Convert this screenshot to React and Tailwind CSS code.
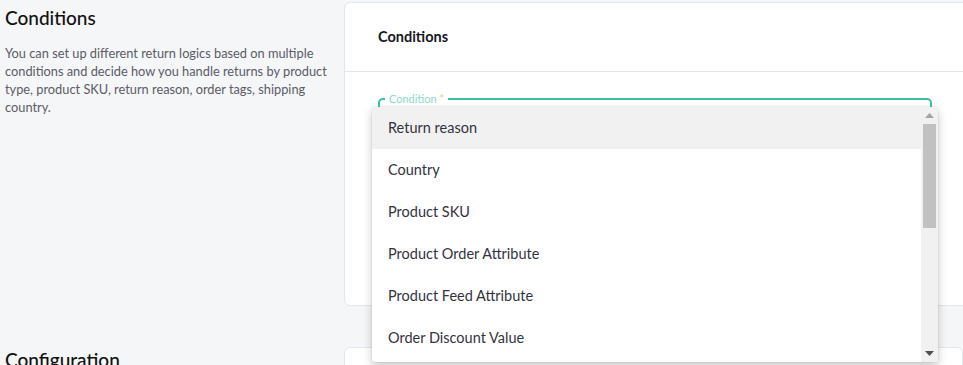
const options = [
  "Return reason",
  "Country",
  "Product SKU",
  "Product Order Attribute",
  "Product Feed Attribute",
  "Order Discount Value",
  "Order Tags",
];

const App = () => {
  return (
    <div className="w-[963px] h-[365px] overflow-hidden bg-[#f5f6f8] font-['Lato',sans-serif]">

      <div className="flex">

        <div className="w-[344px] shrink-0 pl-[5px] pr-[14px] pt-[5px]">
          <h2 className="text-[19px] leading-[26px] font-medium text-[#111]">
            Conditions
          </h2>
          <p className="mt-[13px] text-[12.8px] leading-[18px] text-[#5b5b66]">
            You can set up different return logics based on multiple conditions and decide how you handle returns by product type, product SKU, return reason, order tags, shipping country.
          </p>
        </div>

        <div className="relative shrink-0 w-[680px] mt-[2px] h-[304px] bg-white border border-[#e4e6ee] rounded-[6px]">

          <div className="h-[69px] flex items-center pl-[33px] border-b border-[#e4e6ee]">
            <h3 className="text-[14.5px] font-bold text-[#16161f]">Conditions</h3>
          </div>

          <div className="pl-[33px] pt-[26px]">
            <div className="relative w-[554px] h-[56px] border-2 border-[#3dbfa3] rounded-[5px]">
              <span className="absolute -top-[8px] left-[5px] px-[4px] bg-white text-[11px] leading-[14px] text-[#8fd8c6]">
                Condition <span className="text-[#f5c77e]">*</span>
              </span>
            </div>
          </div>

          <div className="absolute left-[27px] top-[104px] w-[566px] h-[255px] bg-white rounded-[3px] shadow-[0_4px_10px_rgba(0,0,0,0.22),0_0_2px_rgba(0,0,0,0.12)] flex overflow-hidden">

            <ul className="flex-1 overflow-hidden">
              {options.map((o, i) => (
                <li
                  key={o}
                  className={`h-[42px] flex items-center pl-4 text-[14.5px] text-[#333340] ${i === 0 ? "bg-[#f1f1f1]" : ""}`}
                >
                  {o}
                </li>
              ))}
            </ul>

            <div className="w-[17px] shrink-0 bg-[#f1f1f1] flex flex-col items-center">
              <div className="h-[17px] flex items-center justify-center">
                <svg width="9" height="5" viewBox="0 0 9 5"><path d="M4.5 0L9 5H0z" fill="#a3a3a3" /></svg>
              </div>
              <div className="w-[13px] h-[104px] bg-[#c1c1c1]"></div>
              <div className="flex-1"></div>
              <div className="h-[17px] flex items-center justify-center">
                <svg width="9" height="5" viewBox="0 0 9 5"><path d="M0 0H9L4.5 5z" fill="#505050" /></svg>
              </div>
            </div>

          </div>

        </div>

      </div>

      <div className="flex mt-[41px]">
        <div className="w-[344px] shrink-0 pl-[5px]">
          <h2 className="text-[19px] leading-[26px] font-medium text-[#111]">
            Configuration
          </h2>
        </div>
        <div className="w-[680px] h-[60px] bg-white border border-[#e4e6ee] rounded-[6px]"></div>
      </div>

    </div>
  );
};

export default App;
